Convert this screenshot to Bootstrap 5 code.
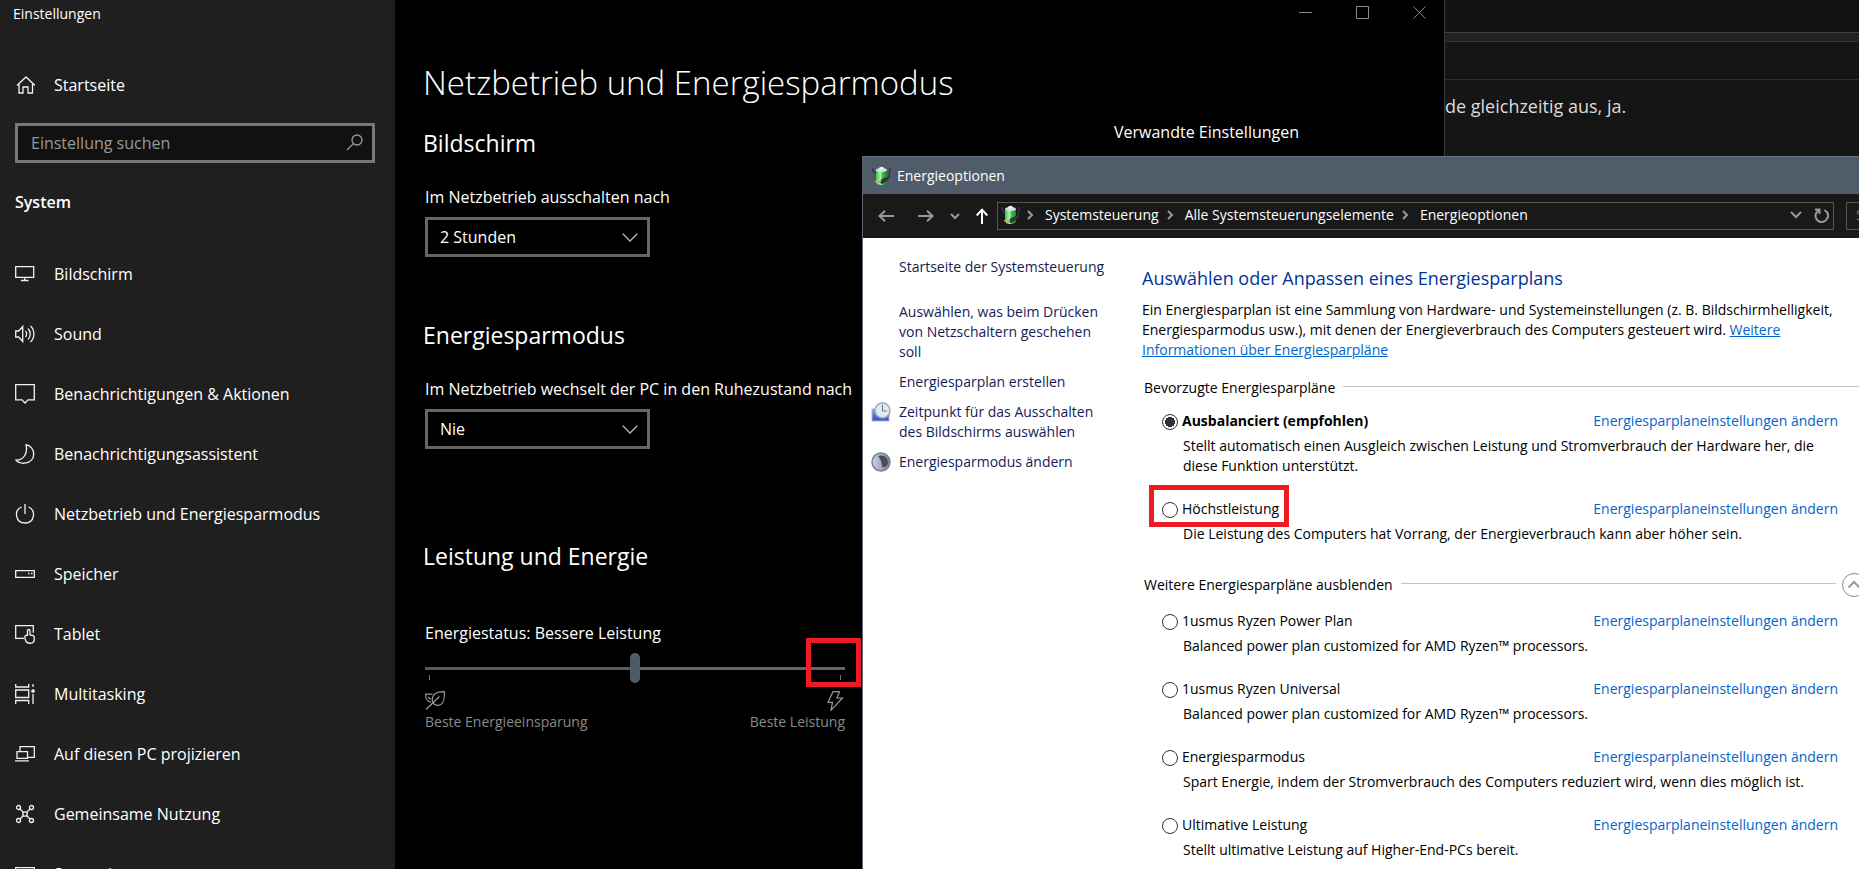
<!DOCTYPE html>
<html lang="de">
<head>
<meta charset="utf-8">
<meta name="viewport" content="width=device-width, initial-scale=1">
<title>Energieoptionen</title>
<link href="https://cdn.jsdelivr.net/npm/bootstrap@5.3.0/dist/css/bootstrap.min.css" rel="stylesheet">
<style>
  body { font-family: "Open Sans", "Noto Sans", sans-serif; background: #151515; font-size: 16px; line-height: 24px; }
  .desktop { min-height: 100vh; }
  .win { position: absolute; overflow: hidden; }
  svg { display: block; flex-shrink: 0; }

  /* chat window in the background */
  .win-back { left: 1445px; right: 0; top: 0; bottom: 0; background: #151515; color: #dcdcdc; font-size: 18px; }
  .back-title { height: 32px; background: #131313; }
  .back-band { height: 10px; background: #222; border-top: 1px solid #444; border-bottom: 1px solid #333; }
  .back-tools { height: 38px; border-bottom: 1px solid #2c2c2c; }
  .back-text { margin: 0; padding-top: 14px; }

  /* settings window */
  .win-settings { left: 0; width: 1445px; top: 0; bottom: 0; background: #000; color: #fff; border-right: 1px solid #3c3c3c; }
  .side { flex: 0 0 395px; background: #1f1f1f; }
  .side-title { height: 28px; padding-left: 13px; font-size: 14px; line-height: 28px; }
  .side a { display: flex; align-items: center; gap: 19px; height: 60px; padding-left: 15px; color: #fff; text-decoration: none; }
  .side a.home { height: 50px; margin-top: 32px; }
  .side svg { width: 20px; height: 20px; fill: none; stroke: #f2f2f2; stroke-width: 1.3; }
  .search { height: 40px; margin: 13px 20px 27px 15px; border: 3px solid #777; background: #111; }
  .search input { background: none; border: 0; color: #fff; padding: 0 0 0 13px; font-size: 16px; outline: 0; }
  .search input::placeholder { color: #999; opacity: 1; }
  .search svg { margin-right: 8px; stroke: #999; }
  .side-head { font-size: 16px; font-weight: 600; line-height: 24px; padding-left: 15px; margin-bottom: 30px; }
  .pane { padding-left: 28px; }
  .caption { height: 60px; padding-right: 16px; }
  .caption button { width: 57px; height: 25px; padding: 0 0 0 16px; background: none; border: 0; }
  .caption svg { fill: none; stroke: #888; margin-left: 26px; }
  .pane h1 { font-size: 33px; font-weight: 300; line-height: 46px; margin: 0; }
  .pane h2 { font-size: 23px; font-weight: 400; line-height: 30px; margin: 0 0 27px; }
  .pane-main { flex: 0 0 691px; padding-top: 22px; white-space: nowrap; }
  .related { padding-top: 14px; }
  .field { padding-left: 2px; margin-bottom: 63px; }
  .field label { display: block; margin-bottom: 8px; }
  .field .form-select { width: 225px; height: 40px; border: 3px solid #666; border-radius: 0; color: #fff; padding: 0 0 0 12px; font-size: 16px;
    background: #000 url("data:image/svg+xml,%3Csvg xmlns='http://www.w3.org/2000/svg' width='16' height='9'%3E%3Cpath d='M.8.8 8 8 15.200.8' fill='none' stroke='%23bbb' stroke-width='1.300'/%3E%3C/svg%3E") no-repeat right 9px center / 16px 9px; }
  .field.last { margin-bottom: 92px; }
  .pane h2.power { margin-bottom: 50px; }
  .slide { width: 420px; position: relative; font-size: 14px; line-height: 22px; color: #8a8a8a; }
  .slide input { appearance: none; display: block; width: 100%; height: 30px; margin: 0; background: linear-gradient(90deg, #505b69 50%, #666 50%) no-repeat center / 100% 3px; }
  .slide input::-webkit-slider-thumb { appearance: none; width: 10px; height: 30px; border-radius: 5px; background: #505b69; }
  .slide .tick { position: absolute; top: 22px; width: 1px; height: 5px; background: #777; }
  .slide svg { width: 20px; height: 20px; fill: none; stroke: #999; stroke-width: 1.2; }
  .marked::after { content: ""; position: absolute; border: 5px solid #ed1c24; }
  .slide.marked::after { left: 381px; top: -15px; width: 55px; height: 49px; }

  /* power options window */
  .win-power { left: 862px; right: 0; top: 156px; bottom: 0; background: #fff; color: #000; border-left: 1px solid #5c6776; font-size: 14px; line-height: 20px; }
  .win-title { height: 38px; background: #515c6b; border-top: 1px solid #657180; color: #fff; padding-left: 9px; gap: 5px; }
  .bar { height: 44px; background: #191919; color: #fff; padding-left: 15px; }
  .bar button { background: none; border: 0; padding: 0; }
  .bar svg.ln { fill: none; stroke: #999; }
  .addr { height: 28px; border: 1px solid #555; margin-left: 9px; padding: 0 0 2px 3px; }
  .addr .breadcrumb { margin: 0; font-size: 14px; flex-wrap: nowrap; white-space: nowrap; }
  .addr .sep { margin: 0 10px 0 4px; }
  .addr a + .sep { margin-left: 6px; }
  .addr a { color: #fff; text-decoration: none; }
  .find { flex: 0 0 13px; height: 28px; border: 1px solid #555; border-right: 0; margin-left: 12px; overflow: hidden; }
  .find input { width: 100px; background: none; border: 0; padding: 0 0 0 9px; line-height: 24px; font-size: 14px; color: #fff; }
  .find input::placeholder { color: #777; opacity: 1; }
  .tasks { flex: 0 0 279px; padding: 19px 31px 0 8px; }
  .tasks a { display: grid; grid-template-columns: 20px 212px; gap: 8px; color: #151c55; text-decoration: none; margin-bottom: 10px; }
  .tasks a.first { margin-bottom: 25px; }
  .tasks a span { grid-column: 2; }
  .tasks a svg { grid-column: 1; grid-row: 1; }
  .plans { padding-top: 28px; min-width: 0; }
  .plans h2 { font-size: 18px; line-height: 24px; color: #039; margin: 0 0 10px; }
  .plans a { color: #06c; }
  .plans .intro { margin: 0 9px 18px 0; }
  .group-head { height: 20px; margin-bottom: 8px; padding-left: 2px; gap: 8px; }
  .group-head.more { margin: 31px 0 11px; }
  .group-head hr { flex: 1; margin: 0 0 3px; border-color: #c4c4c4; opacity: 1; }
  .group-head button { width: 17px; height: 24px; background: none; border: 0; padding: 0; margin-left: -2px; overflow: visible; }
  .plan { padding: 0 21px 0 20px; margin-bottom: 18px; }
  .plan a { text-decoration: none; }
  .plan p { margin: 0; padding-left: 21px; }
  .plan-top { height: 30px; }
  .plan label { position: relative; display: flex; align-items: center; gap: 4px; height: 30px; }
  .plan label.marked::after { inset: -9px -10px -3px -13px; }
  .plan .form-check-input { width: 16px; height: 16px; margin: 2px 0 0; border: 1px solid #333; }
  .plan .form-check-input:checked { background: #fff radial-gradient(circle, #333 5px, #fff 5px) no-repeat center / 14px 14px; }
</style>
</head>
<body>
<svg width="0" height="0" class="position-absolute" aria-hidden="true">
  <defs>
    <linearGradient id="green" x1="0" x2="1"><stop offset="0" stop-color="#3fc04c"/><stop offset=".4" stop-color="#a4f8a8"/><stop offset=".6" stop-color="#38c046"/><stop offset="1" stop-color="#1c842a"/></linearGradient>
    <linearGradient id="blue" x1="0" y1="0" x2="0" y2="1"><stop offset="0" stop-color="#7da0ee"/><stop offset="1" stop-color="#2c52c8"/></linearGradient>
    <linearGradient id="orb" x1="0" x2="1"><stop offset="0" stop-color="#c9d2ea"/><stop offset="1" stop-color="#7e8698"/></linearGradient>
    <symbol id="battery" viewBox="0 0 20 20">
      <path d="M1 2v3l3 3M14 13c4 0 4-4 3-7 2-1 2-3 0-4" fill="none" stroke="#34344e" stroke-width="1.5"/>
      <path d="M4 4v12c0 4 11 4 11 0V4z" fill="url(#green)"/>
      <ellipse cx="9.500" cy="4" rx="5.500" ry="2" fill="#d3dde0"/><ellipse cx="9.500" cy="2.300" rx="2.500" ry="1.500" fill="#eef3f4"/>
      <path d="M7 16l3-3 5-2 2 1-3 4-4 2z" fill="#33373a"/><path d="M3 16l4-2M5 18l4-3" stroke="#d9b27c" stroke-width="1.300"/>
    </symbol>
  </defs>
</svg>

<div class="desktop">
  <div class="win win-back">
    <div class="back-title"></div>
    <div class="back-band"></div>
    <div class="back-tools"></div>
    <p class="back-text">de gleichzeitig aus, ja.</p>
  </div>

  <div class="win win-settings d-flex">
    <nav class="side">
      <div class="side-title">Einstellungen</div>
      <a class="home" href="#"><svg viewBox="0 0 20 20"><path d="M2 10.500 11 2l9 8.500M4 9v9h4v-6h5v6h4.500V9"/></svg>Startseite</a>
      <div class="search d-flex align-items-center">
        <input class="flex-grow-1" type="text" placeholder="Einstellung suchen" aria-label="Einstellung suchen">
        <svg viewBox="0 0 20 20"><circle cx="13" cy="7" r="5"/><path d="M9.500 10.500 3 17"/></svg>
      </div>
      <h2 class="side-head">System</h2>
      <a href="#"><svg viewBox="0 0 20 20"><path d="M.700 2.700h18v10.600H.700zM9.700 13v3.500M6 16.500h7.500"/></svg>Bildschirm</a>
      <a href="#"><svg viewBox="0 0 20 20"><path d="M.700 7h3l4-4.500v15l-4-4.500h-3zM10.500 7c1.500 1.500 1.500 4.500 0 6M13 4.500c3 3 3 8 0 11M15.500 2c4.500 4 4.500 12 0 16"/></svg>Sound</a>
      <a href="#"><svg viewBox="0 0 20 20"><path d="M.700.700h18.600v15.100H13L10 19l-3-3.200H.700z"/></svg>Benachrichtigungen &amp; Aktionen</a>
      <a href="#"><svg viewBox="0 0 20 20"><path d="M11 .700c10 2 11 17-1.500 18.500-4 .3-7-1.200-8.500-3C9 16 13 9 11 .700z"/></svg>Benachrichtigungsassistent</a>
      <a href="#"><svg viewBox="0 0 20 20"><path d="M10 0v10M6.500 3C-1.500 6.500.500 19 10 19s11.500-12.500 3.500-16"/></svg>Netzbetrieb und Energiesparmodus</a>
      <a href="#"><svg viewBox="0 0 20 20"><path d="M.700 6.700h18.600v6.600H.700zM13 9.500h1.500M16 9.500h1.500"/></svg>Speicher</a>
      <a href="#"><svg viewBox="0 0 20 20"><path d="M9 14.300H.700V1.700h17.600v7M12.500 12V6.500c0-1.500 2.500-1.500 2.500 0V11l3 .5c1.500.3 1.300 1.500 1.300 4 0 5-8 5-9 0-.5-2-1.500-3.500 2.200-4.500z"/></svg>Tablet</a>
      <a href="#"><svg viewBox="0 0 20 20"><path d="M.700 6h13v7.500H.700zM.700 0v3h13V0M.700 20v-3.500h13V20M18 0v3M18 10v10"/><circle cx="18" cy="7" r="1.200" fill="#f2f2f2"/></svg>Multitasking</a>
      <a href="#"><svg viewBox="0 0 20 20"><path d="M5 7.500V2.700h14.300v10.600H13M2 7.700h10.500v6.600H2zM0 16.800h14"/></svg>Auf diesen PC projizieren</a>
      <a href="#"><svg viewBox="0 0 20 20"><circle cx="3.500" cy="3.500" r="2"/><circle cx="16.500" cy="3.500" r="2"/><circle cx="3.500" cy="16.500" r="2"/><circle cx="16.500" cy="16.500" r="2"/><circle cx="10" cy="10" r="2.200"/><path d="m5 5 3.500 3.500M15 5l-3.500 3.500M5 15l3.500-3.500M15 15l-3.500-3.500"/></svg>Gemeinsame Nutzung</a>
      <a href="#"><svg viewBox="0 0 20 20"><path d="M0 3.700h20M.700 3v12h18.600V3"/></svg>Systemkomponenten</a>
    </nav>
    <main class="pane flex-grow-1">
      <div class="caption d-flex justify-content-end">
        <button type="button" aria-label="Minimieren"><svg width="13" height="13"><path d="M0 6.500h13"/></svg></button>
        <button type="button" aria-label="Maximieren"><svg width="13" height="13"><path d="M.500.500h12v12H.500z"/></svg></button>
        <button type="button" aria-label="Schließen"><svg width="13" height="13"><path d="m.500.500 12 12m0-12-12 12"/></svg></button>
      </div>
      <h1>Netzbetrieb und Energiesparmodus</h1>
      <div class="d-flex">
        <div class="pane-main">
          <h2>Bildschirm</h2>
          <div class="field">
            <label for="screen">Im Netzbetrieb ausschalten nach</label>
            <select id="screen" class="form-select"><option>2 Stunden</option></select>
          </div>
          <h2>Energiesparmodus</h2>
          <div class="field last">
            <label for="sleep">Im Netzbetrieb wechselt der PC in den Ruhezustand nach</label>
            <select id="sleep" class="form-select"><option>Nie</option></select>
          </div>
          <h2 class="power">Leistung und Energie</h2>
          <div class="field">
            <label for="mode">Energiestatus: Bessere Leistung</label>
            <div class="slide marked">
              <input id="mode" type="range" min="0" max="100" value="50">
              <span class="tick start-0 ms-1"></span><span class="tick end-0 me-1"></span>
              <div class="d-flex justify-content-between pt-2">
                <svg viewBox="0 0 20 20"><path d="M1 18.500 14.500 5.500M19.300.700c.500 9-1 13-6 13.600-3.500.3-6-2-6-5C7.300 3 11 .700 19.300.700zM7.500 3.200H.700C.500 8 1.500 10.500 6 11M3 6l3 2.500"/></svg>
                <svg viewBox="0 0 20 20"><path d="M8 .700h6.500L12 7h5.500L6 19.300l1.500-8H3z"/></svg>
              </div>
              <div class="d-flex justify-content-between"><span>Beste Energieeinsparung</span><span>Beste Leistung</span></div>
            </div>
          </div>
        </div>
        <div class="related">Verwandte Einstellungen</div>
      </div>
    </main>
  </div>

  <div class="win win-power">
    <div class="win-title d-flex align-items-center"><svg width="20" height="20"><use href="#battery"/></svg>Energieoptionen</div>
    <div class="bar d-flex align-items-center">
      <button type="button" aria-label="Zurück"><svg class="ln" width="16" height="12" stroke-width="2"><path d="M16 6H1.500M7 .700 1.500 6 7 11.300"/></svg></button>
      <button type="button" class="ms-4" aria-label="Vorwärts"><svg class="ln" width="16" height="12" stroke-width="2"><path d="M0 6h14.500M9 .700 14.500 6 9 11.300"/></svg></button>
      <button type="button" class="ms-3" aria-label="Verlauf"><svg class="ln" width="10" height="7" stroke-width="2"><path d="m1 1 4 4 4-4"/></svg></button>
      <button type="button" class="ms-3" aria-label="Nach oben"><svg class="ln" width="12" height="16" stroke-width="2" viewBox="0 0 12 16"><path stroke="#fff" d="M6 16V2M.700 7.500 6 1.700l5.300 5.800"/></svg></button>
      <div class="addr d-flex align-items-center flex-grow-1">
        <svg width="20" height="20"><use href="#battery"/></svg>
        <nav class="flex-grow-1" aria-label="Pfad"><div class="breadcrumb align-items-center">
          <svg class="ln sep" width="10" height="10" stroke-width="2"><path d="m3 1 4 4-4 4"/></svg><a href="#">Systemsteuerung</a>
          <svg class="ln sep" width="10" height="10" stroke-width="2"><path d="m3 1 4 4-4 4"/></svg><a href="#">Alle Systemsteuerungselemente</a>
          <svg class="ln sep" width="10" height="10" stroke-width="2"><path d="m3 1 4 4-4 4"/></svg><a href="#">Energieoptionen</a>
        </div></nav>
        <button type="button" aria-label="Frühere Orte"><svg class="ln" width="12" height="8" stroke-width="2"><path d="m1 1 5 5 5-5"/></svg></button>
        <button type="button" class="ms-2 me-1" aria-label="Aktualisieren"><svg class="ln ms-1" width="15" height="15" viewBox="0 0 15 15" stroke-width="2"><path d="M10.500 2C18 7 12 14 7.500 14S-2 7 5 2M1 1.500h4.500V6"/></svg></button>
      </div>
      <div class="find"><input type="text" placeholder="Systemsteuerung" aria-label="Systemsteuerung durchsuchen"></div>
    </div>
    <div class="d-flex">
      <nav class="tasks">
        <a class="first" href="#"><span>Startseite der Systemsteuerung</span></a>
        <a href="#"><span>Auswählen, was beim Drücken von Netzschaltern geschehen soll</span></a>
        <a href="#"><span>Energiesparplan erstellen</span></a>
        <a href="#"><svg width="20" height="20"><path d="M1 7h17v12H1z" fill="url(#blue)" stroke="#a9b4cc"/><circle cx="11.500" cy="8.500" r="7.500" fill="#dfeaf3" stroke="#a3a9ae" stroke-width="1.500"/><path d="M11.500 3v6H16" fill="none" stroke="#66788c"/></svg><span>Zeitpunkt für das Ausschalten des Bildschirms auswählen</span></a>
        <a href="#"><svg width="20" height="20"><circle cx="10" cy="10" r="9" fill="url(#orb)" stroke="#7c8088" stroke-width="1.500"/><path d="M7 4c6-2 10 2 10 7-1 4-4 5-6 4 0-4-1-8-4-11z" fill="#4a4d55"/></svg><span>Energiesparmodus ändern</span></a>
      </nav>
      <section class="plans flex-grow-1">
        <h2>Auswählen oder Anpassen eines Energiesparplans</h2>
        <p class="intro">Ein Energiesparplan ist eine Sammlung von Hardware- und Systemeinstellungen (z. B. Bildschirmhelligkeit, Energiesparmodus usw.), mit denen der Energieverbrauch des Computers gesteuert wird. <a href="#">Weitere Informationen über Energiesparpläne</a></p>
        <div class="group-head d-flex align-items-center">Bevorzugte Energiesparpläne<hr></div>
        <div class="plan">
          <div class="plan-top d-flex justify-content-between align-items-center"><label class="fw-bold"><input class="form-check-input" type="radio" name="plan" checked>Ausbalanciert (empfohlen)</label><a href="#">Energiesparplaneinstellungen ändern</a></div>
          <p>Stellt automatisch einen Ausgleich zwischen Leistung und Stromverbrauch der Hardware her, die diese Funktion unterstützt.</p>
        </div>
        <div class="plan">
          <div class="plan-top d-flex justify-content-between align-items-center"><label class="marked"><input class="form-check-input" type="radio" name="plan">Höchstleistung</label><a href="#">Energiesparplaneinstellungen ändern</a></div>
          <p>Die Leistung des Computers hat Vorrang, der Energieverbrauch kann aber höher sein.</p>
        </div>
        <div class="group-head more d-flex align-items-center">Weitere Energiesparpläne ausblenden<hr><button type="button" aria-label="Ausblenden"><svg width="24" height="24" fill="none"><circle cx="12" cy="12" r="11.500" stroke="#888"/><path d="m6.500 14.500 5.500-5.500 5.500 5.500" stroke="#999" stroke-width="2"/></svg></button></div>
        <div class="plan">
          <div class="plan-top d-flex justify-content-between align-items-center"><label><input class="form-check-input" type="radio" name="plan">1usmus Ryzen Power Plan</label><a href="#">Energiesparplaneinstellungen ändern</a></div>
          <p>Balanced power plan customized for AMD Ryzen™ processors.</p>
        </div>
        <div class="plan">
          <div class="plan-top d-flex justify-content-between align-items-center"><label><input class="form-check-input" type="radio" name="plan">1usmus Ryzen Universal</label><a href="#">Energiesparplaneinstellungen ändern</a></div>
          <p>Balanced power plan customized for AMD Ryzen™ processors.</p>
        </div>
        <div class="plan">
          <div class="plan-top d-flex justify-content-between align-items-center"><label><input class="form-check-input" type="radio" name="plan">Energiesparmodus</label><a href="#">Energiesparplaneinstellungen ändern</a></div>
          <p>Spart Energie, indem der Stromverbrauch des Computers reduziert wird, wenn dies möglich ist.</p>
        </div>
        <div class="plan">
          <div class="plan-top d-flex justify-content-between align-items-center"><label><input class="form-check-input" type="radio" name="plan">Ultimative Leistung</label><a href="#">Energiesparplaneinstellungen ändern</a></div>
          <p>Stellt ultimative Leistung auf Higher-End-PCs bereit.</p>
        </div>
      </section>
    </div>
  </div>
</div>
<script src="https://cdn.jsdelivr.net/npm/bootstrap@5.3.0/dist/js/bootstrap.bundle.min.js"></script>
</body>
</html>
